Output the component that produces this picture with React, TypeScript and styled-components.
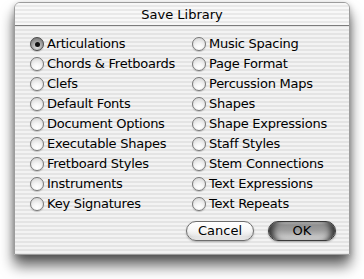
import React from 'react';
import styled, { createGlobalStyle } from 'styled-components';

const GlobalStyle = createGlobalStyle`
  html, body {
    margin: 0;
    padding: 0;
    background: #ffffff;
  }
  body {
    font-family: "DejaVu Sans", "Liberation Sans", sans-serif;
    font-size: 13px;
    color: #000;
  }
`;

const pinstripe = `repeating-linear-gradient(
  to bottom,
  #f3f3f3 0px,
  #f3f3f3 2px,
  #e4e4e4 2px,
  #e4e4e4 4px
)`;

const Page = styled.div`
  width: 364px;
  height: 279px;
  padding: 2px 0 0 14px;
  box-sizing: border-box;
`;

const Window = styled.div`
  width: 336px;
  height: 253px;
  box-sizing: border-box;
  display: flex;
  flex-direction: column;
  border: 1px solid #9c9c9c;
  border-radius: 6px 6px 0 0;
  background: ${pinstripe};
  box-shadow: 0 11px 14px rgba(0, 0, 0, 0.6), 0 2px 6px rgba(0, 0, 0, 0.25);
`;

const TitleBar = styled.div`
  height: 21px;
  flex-shrink: 0;
  display: flex;
  align-items: center;
  justify-content: center;
  border-bottom: 1px solid #7c7c7c;
  border-radius: 5px 5px 0 0;
  background: repeating-linear-gradient(
    to bottom,
    #f8f8f8 0px,
    #f8f8f8 2px,
    #e9e9e9 2px,
    #e9e9e9 4px
  );
  font-size: 13px;
  padding-top: 1px;
`;

const Body = styled.div`
  flex: 1;
  display: flex;
  flex-direction: column;
  padding: 8px 13px 0 15px;
`;

const OptionGrid = styled.div`
  display: grid;
  grid-template-columns: 162px 1fr;
  grid-template-rows: repeat(9, 20px);
  grid-auto-flow: column;
`;

const Option = styled.label`
  display: flex;
  align-items: center;
  gap: 3px;
  white-space: nowrap;
  line-height: 20px;
  letter-spacing: -0.25px;
`;

const Radio = styled.span<{ $checked?: boolean }>`
  position: relative;
  width: 14px;
  height: 14px;
  box-sizing: border-box;
  border-radius: 50%;
  border: 1px solid ${(p) => (p.$checked ? '#4a4a4a' : '#777')};
  background: ${(p) =>
    p.$checked
      ? 'radial-gradient(circle at 50% 75%, #e4e4e4 0%, #a8a8a8 45%, #6a6a6a 100%)'
      : 'radial-gradient(circle at 50% 80%, #ffffff 0%, #f4f4f4 40%, #cfcfcf 100%)'};
  box-shadow: 0 1px 1px rgba(0, 0, 0, 0.2);
  flex-shrink: 0;

  &::after {
    content: '';
    display: ${(p) => (p.$checked ? 'block' : 'none')};
    position: absolute;
    left: 3.5px;
    top: 3.5px;
    width: 5px;
    height: 5px;
    border-radius: 50%;
    background: #111;
  }
`;

const ButtonRow = styled.div`
  display: flex;
  justify-content: flex-end;
  gap: 14px;
  margin-top: 7px;
`;

const Button = styled.button<{ $default?: boolean }>`
  width: 68px;
  height: 20px;
  box-sizing: border-box;
  border-radius: 10px;
  font-family: inherit;
  font-size: 13px;
  color: #000;
  padding: 0;
  line-height: 18px;
  border: 1px solid ${(p) => (p.$default ? '#3a3a3a' : '#6e6e6e')};
  background: ${(p) =>
    p.$default
      ? 'linear-gradient(to bottom, #8a8a8a 0%, #9c9c9c 45%, #b8b8b8 70%, #dcdcdc 100%)'
      : 'linear-gradient(to bottom, #ffffff 0%, #f6f6f6 50%, #e6e6e6 80%, #f8f8f8 100%)'};
  box-shadow: ${(p) =>
    p.$default
      ? 'inset 8px 0 6px -4px #2e2e2e, inset -8px 0 6px -4px #2e2e2e, inset 0 2px 2px rgba(255,255,255,0.35), 0 1px 2px rgba(0,0,0,0.3)'
      : 'inset 0 -2px 3px rgba(0,0,0,0.08), 0 1px 2px rgba(0,0,0,0.25)'};
`;

const left = [
  'Articulations',
  'Chords & Fretboards',
  'Clefs',
  'Default Fonts',
  'Document Options',
  'Executable Shapes',
  'Fretboard Styles',
  'Instruments',
  'Key Signatures',
];

const right = [
  'Music Spacing',
  'Page Format',
  'Percussion Maps',
  'Shapes',
  'Shape Expressions',
  'Staff Styles',
  'Stem Connections',
  'Text Expressions',
  'Text Repeats',
];

export default function App() {
  const items = [...left, ...right];
  return (
    <Page>
      <GlobalStyle />
      <Window>
        <TitleBar>Save Library</TitleBar>
        <Body>
          <OptionGrid>
            {items.map((name) => (
              <Option key={name}>
                <Radio $checked={name === 'Articulations'} />
                {name}
              </Option>
            ))}
          </OptionGrid>
          <ButtonRow>
            <Button>Cancel</Button>
            <Button $default>OK</Button>
          </ButtonRow>
        </Body>
      </Window>
    </Page>
  );
}
